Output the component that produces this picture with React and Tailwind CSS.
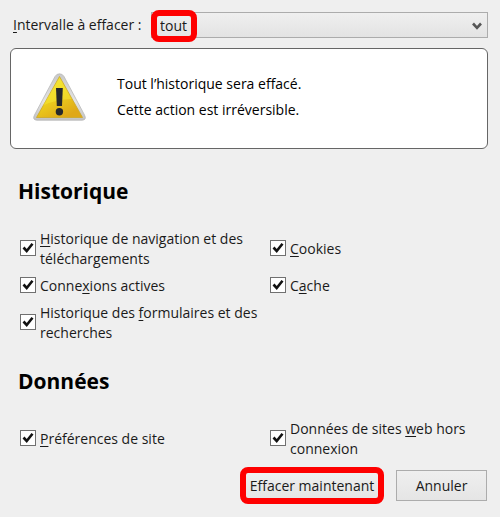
import { useState } from "react";

const historyItems = [
  {
    id: "history",
    before: "",
    accessKey: "H",
    after: "istorique de navigation et des téléchargements",
  },
  { id: "cookies", before: "", accessKey: "C", after: "ookies" },
  { id: "sessions", before: "Conne", accessKey: "x", after: "ions actives" },
  { id: "cache", before: "C", accessKey: "a", after: "che" },
  {
    id: "forms",
    before: "Historique des ",
    accessKey: "f",
    after: "ormulaires et des recherches",
  },
];

const dataItems = [
  { id: "site-settings", before: "", accessKey: "P", after: "références de site" },
  {
    id: "offline",
    before: "Données de sites ",
    accessKey: "w",
    after: "eb hors connexion",
  },
];

function WarningIcon() {
  return (
    <svg width="54" height="48" viewBox="0 0 54 48" aria-hidden="true">
      <defs>
        <linearGradient id="warning-rim" x1="0" y1="0" x2="0" y2="1">
          <stop offset="0" stopColor="#c8c8c8" />
          <stop offset="0.6" stopColor="#e4e4e4" />
          <stop offset="1" stopColor="#c2c2c2" />
        </linearGradient>
        <linearGradient id="warning-fill" x1="0" y1="0" x2="0.6" y2="1">
          <stop offset="0" stopColor="#f3e63a" />
          <stop offset="0.55" stopColor="#edcf1e" />
          <stop offset="1" stopColor="#dfa818" />
        </linearGradient>
      </defs>
      <path
        d="M26.500 0.800 Q29.500 0.800 31 3.500 L51.500 42 Q54 47 49 47.200 H4 Q-1 47 1.500 42 L22 3.500 Q23.500 0.800 26.500 0.800 Z"
        fill="url(#warning-rim)"
        stroke="#b8b8b8"
        strokeWidth="0.800"
      />
      <path
        d="M26.500 3.500 L49.500 44.500 H3.500 Z"
        fill="url(#warning-fill)"
        stroke="#cba826"
        strokeWidth="0.800"
        strokeLinejoin="round"
      />
      <path d="M26.500 4.500 L38.500 26 Q24 26 10 32.500 Z" fill="#f8ee3a" opacity="0.450" />
      <path d="M23 15 H29.800 L29 33 H23.800 Z" fill="#26282c" />
      <circle cx="26.400" cy="38.800" r="3.700" fill="#26282c" />
    </svg>
  );
}

function CheckItem({ item }) {
  const [checked, setChecked] = useState(true);

  return (
    <label htmlFor={item.id} className="flex min-h-[22px] items-center gap-1">
      <span className="grid shrink-0 place-items-center pb-0.5">
        <input
          id={item.id}
          type="checkbox"
          checked={checked}
          onChange={() => setChecked(!checked)}
          className="peer col-start-1 row-start-1 size-4 appearance-none border border-[#707070] bg-white"
        />
        <svg
          width="16"
          height="16"
          viewBox="0 0 16 16"
          className="pointer-events-none invisible col-start-1 row-start-1 peer-checked:visible"
          aria-hidden="true"
        >
          <path
            d="M3.500 7.500 L6.700 11 L12.500 3.800"
            fill="none"
            stroke="#111"
            strokeWidth="2.600"
          />
        </svg>
      </span>
      <span>
        {item.before}
        <u className="underline-offset-2">{item.accessKey}</u>
        {item.after}
      </span>
    </label>
  );
}

function CheckGroup({ title, items }) {
  return (
    <section>
      <h2 className="text-[21px] leading-7 font-bold text-black">{title}</h2>
      <div className="mt-6 grid grid-cols-[250px_1fr] gap-y-1.5 pl-0.5 leading-5">
        {items.map((item) => (
          <CheckItem key={item.id} item={item} />
        ))}
      </div>
    </section>
  );
}

export default function App() {
  return (
    <form
      className="min-h-screen bg-[#efefef] px-[10px] pt-3 pb-3 font-['Open_Sans',sans-serif] text-sm text-[#1a1a1a]"
      onSubmit={(e) => e.preventDefault()}
    >
      <div className="flex items-center pr-0.5">
        <label htmlFor="range" className="w-[141px] shrink-0 pl-[3px]">
          <u className="underline-offset-2">I</u>ntervalle à effacer :
        </label>
        <div className="relative flex-1">
          <select
            id="range"
            defaultValue="all"
            className="block h-[26px] w-full appearance-none border border-[#acacac] bg-linear-to-b from-[#efefef] to-[#e3e3e3] pt-0.5 pl-2"
          >
            <option value="all">tout</option>
            <option value="hour">la dernière heure</option>
            <option value="day">aujourd’hui</option>
          </select>
          <span className="pointer-events-none absolute -top-0.5 left-0 h-8 w-[46px] rounded-lg border-6 border-[#fe0000]" />
          <svg
            width="10"
            height="8"
            viewBox="0 0 10 8"
            className="pointer-events-none absolute top-2.5 right-1.5"
            aria-hidden="true"
          >
            <path d="M1 1.500 L5 5.800 L9 1.500" fill="none" stroke="#555" strokeWidth="2.600" />
          </svg>
        </div>
      </div>

      <div className="mt-2.5 mr-0.5 flex h-[101px] items-center gap-[30px] rounded-md border border-[#666] bg-white pb-[3px] pl-[22px]">
        <WarningIcon />
        <div className="leading-[26px] text-black">
          <p>Tout l’historique sera effacé.</p>
          <p>Cette action est irréversible.</p>
        </div>
      </div>

      <div className="mt-7 flex flex-col gap-6 pl-2">
        <CheckGroup title="Historique" items={historyItems} />
        <CheckGroup title="Données" items={dataItems} />
      </div>

      <div className="mt-2 mr-[3px] flex items-center justify-end gap-3">
        <button
          type="submit"
          className="h-[37px] w-36 rounded-lg border-6 border-[#fe0000] bg-linear-to-b from-[#efefef] to-[#e5e5e5] whitespace-nowrap"
        >
          Effacer maintenant
        </button>
        <button
          type="button"
          className="h-[31px] w-[91px] border border-[#acacac] bg-linear-to-b from-[#efefef] to-[#e5e5e5]"
        >
          Annuler
        </button>
      </div>
    </form>
  );
}
